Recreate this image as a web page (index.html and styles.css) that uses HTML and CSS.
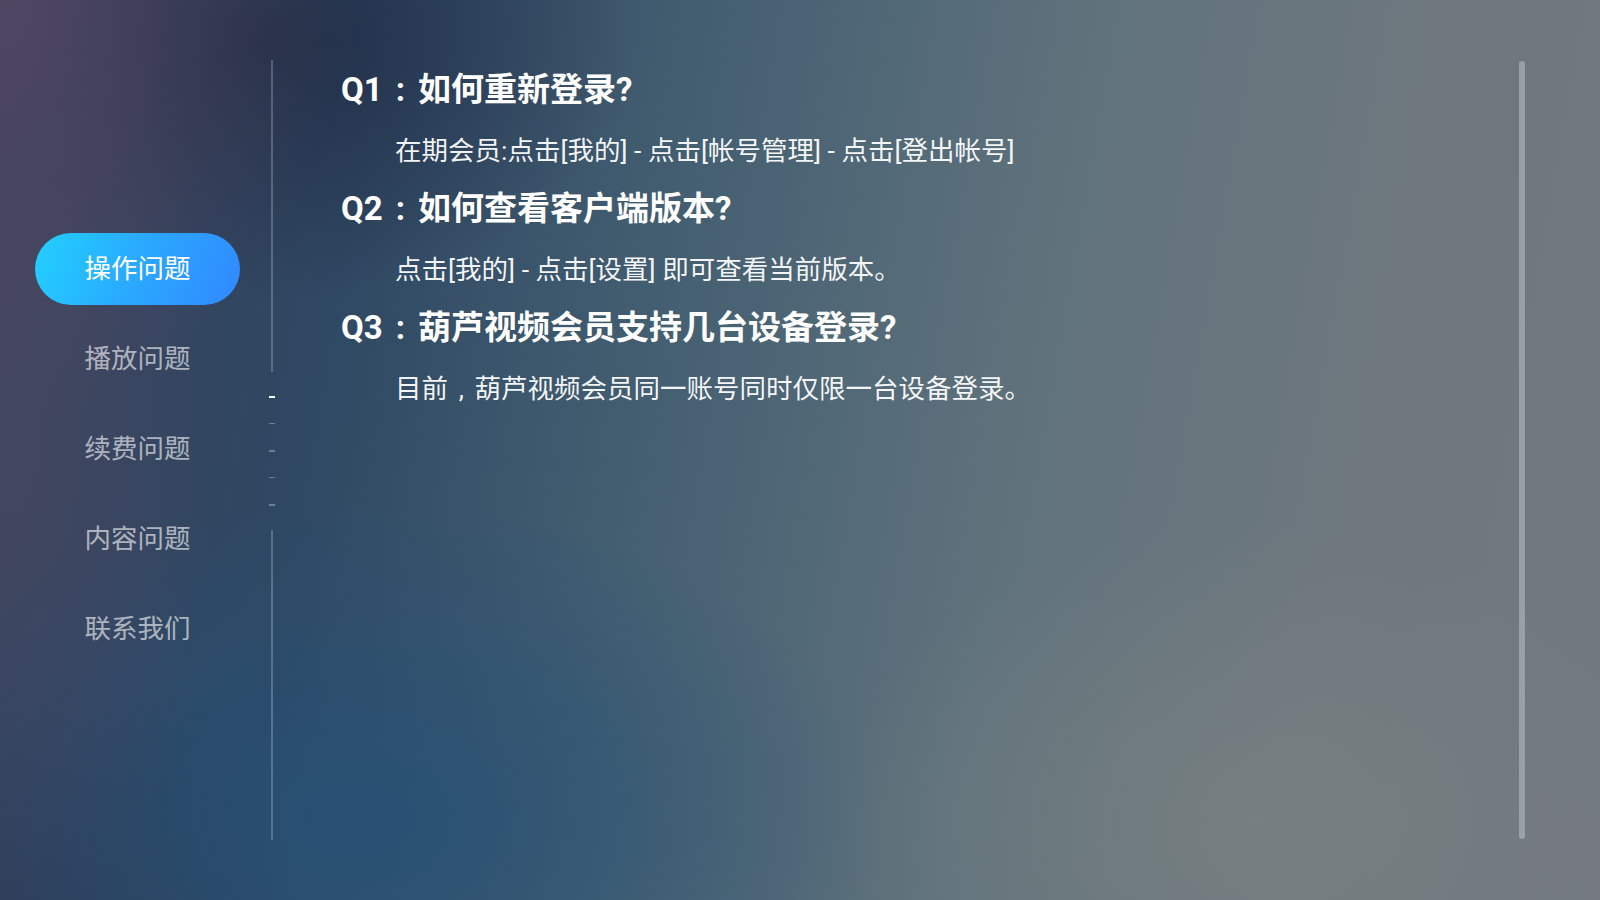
FILE: index.html
```html
<!DOCTYPE html>
<html lang="zh-CN">
<head>
<meta charset="utf-8">
<title>常见问题</title>
<link rel="stylesheet" href="styles.css">
</head>
<body>
<div class="screen">
  <nav class="sidebar">
    <div class="nav-item active">操作问题</div>
    <div class="nav-item">播放问题</div>
    <div class="nav-item">续费问题</div>
    <div class="nav-item">内容问题</div>
    <div class="nav-item">联系我们</div>
  </nav>
  <div class="divider">
    <div class="seg seg-top"></div>
    <div class="dashes">
      <div class="dash on"></div>
      <div class="dash thin"></div>
      <div class="dash"></div>
      <div class="dash thin"></div>
      <div class="dash"></div>
    </div>
    <div class="seg seg-bottom"></div>
  </div>
  <main class="content">
    <h2 class="q">Q1<span class="punc">:</span>如何重新登录?</h2>
    <p class="a">在期会员:点击[我的] - 点击[帐号管理] - 点击[登出帐号]</p>
    <h2 class="q">Q2<span class="punc">:</span>如何查看客户端版本?</h2>
    <p class="a">点击[我的] - 点击[设置] 即可查看当前版本。</p>
    <h2 class="q">Q3<span class="punc">:</span>葫芦视频会员支持几台设备登录?</h2>
    <p class="a">目前<span class="punc">,</span>葫芦视频会员同一账号同时仅限一台设备登录。</p>
  </main>
  <div class="scrollbar"></div>
</div>
</body>
</html>
```
FILE: styles.css
```css
html, body {
  margin: 0;
  padding: 0;
  width: 1600px;
  height: 900px;
  overflow: hidden;
}
body {
  font-family: Roboto, "Noto Sans CJK SC", sans-serif;
  color: #fff;
  background:
    radial-gradient(ellipse 340px 420px at 0px 0px, rgba(84,72,100,0.85), rgba(84,72,100,0) 100%),
    radial-gradient(ellipse 220px 520px at 0px 420px, rgba(78,74,100,0.6), rgba(78,74,100,0) 100%),
    radial-gradient(ellipse 380px 260px at 260px 40px, rgba(30,38,62,0.75), rgba(30,38,62,0) 100%),
    radial-gradient(ellipse 520px 320px at 360px 820px, rgba(36,80,118,0.8), rgba(36,80,118,0) 100%),
    radial-gradient(ellipse 300px 260px at 0px 900px, rgba(46,54,78,0.7), rgba(46,54,78,0) 100%),
    radial-gradient(ellipse 420px 300px at 1250px 820px, rgba(124,132,130,0.6), rgba(124,132,130,0) 100%),
    linear-gradient(100deg, #36405a 0%, #2f4863 22%, #456072 42%, #5f727c 62%, #6e777e 82%, #737880 100%);
}
.screen {
  display: flex;
  height: 900px;
}
.sidebar {
  display: flex;
  flex-direction: column;
  gap: 18px;
  margin-left: 35px;
  padding-top: 233px;
  width: 205px;
}
.nav-item {
  height: 72px;
  line-height: 72px;
  border-radius: 36px;
  text-align: center;
  font-size: 26.5px;
  color: rgba(255,255,255,0.6);
}
.nav-item.active {
  color: #fff;
  background: linear-gradient(110deg, #22d0ff 0%, #2aa8ff 50%, #3188ff 100%);
}
.divider {
  display: flex;
  flex-direction: column;
  align-items: center;
  width: 6px;
  margin-left: 29px;
  padding-top: 60px;
}
.seg {
  width: 2px;
  background: rgba(255,255,255,0.22);
}
.seg-top {
  height: 312px;
}
.seg-bottom {
  height: 310px;
  margin-top: 24px;
}
.dashes {
  display: flex;
  flex-direction: column;
  gap: 25px;
  margin-top: 24px;
}
.dash {
  width: 6px;
  height: 2px;
  background: rgba(255,255,255,0.3);
}
.dash.thin {
  height: 1px;
  margin-bottom: 1px;
}
.dash.on {
  background: #fff;
}
.content {
  flex: 1;
  padding-left: 66px;
  padding-top: 70px;
}
.punc {
  display: inline-block;
  width: 1.07em;
  text-align: center;
}
.a .punc {
  width: 1em;
}
.q {
  margin: 0 0 21px 0;
  font-size: 33px;
  line-height: 40px;
  font-weight: 700;
  color: #fff;
}
.a {
  margin: 0 0 18px 54px;
  font-size: 26.5px;
  line-height: 40px;
  color: rgba(255,255,255,0.95);
}
.scrollbar {
  width: 6px;
  height: 778px;
  margin-top: 61px;
  margin-right: 75px;
  border-radius: 3px;
  background: rgba(200,210,215,0.45);
}
```
